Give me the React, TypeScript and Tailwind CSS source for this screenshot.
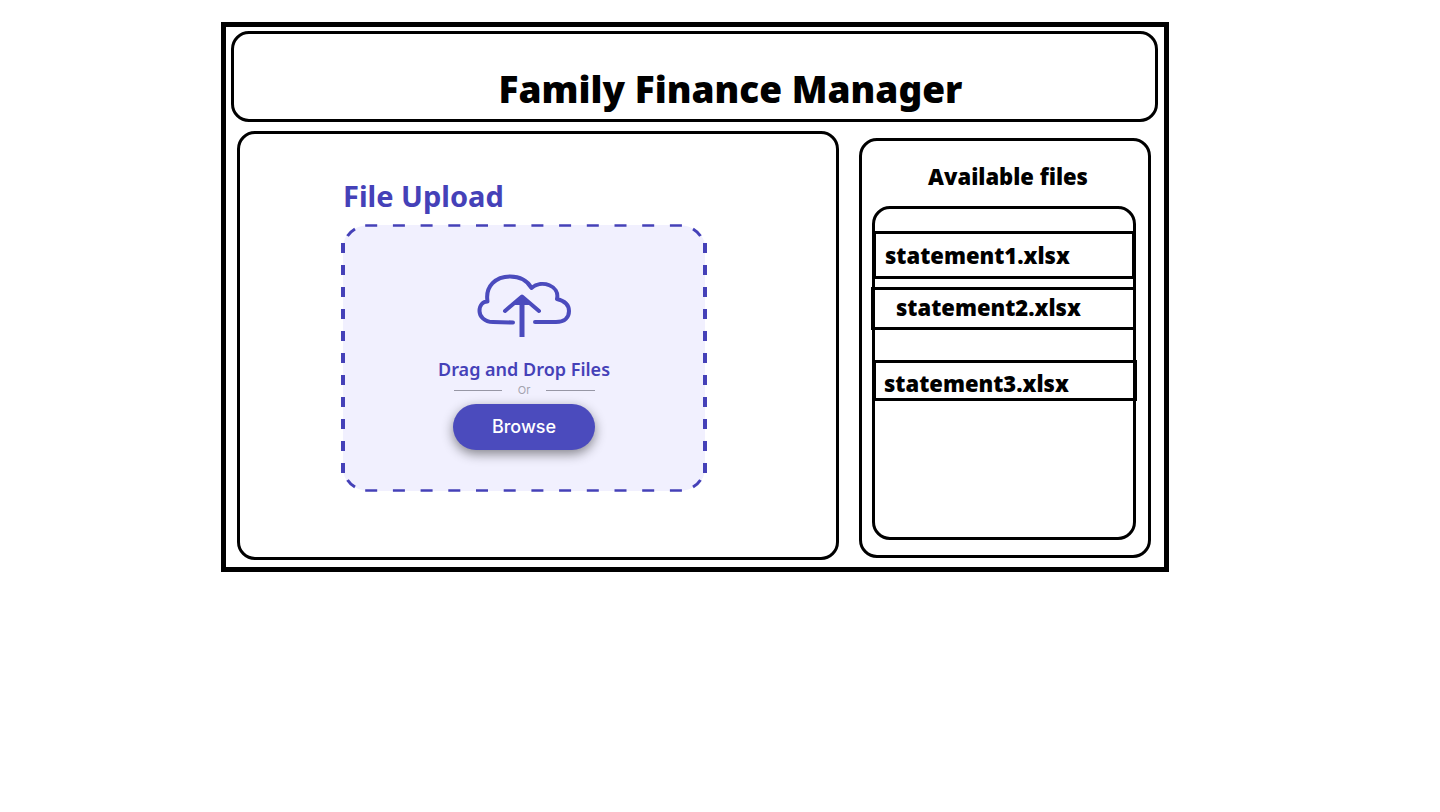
const heavy = "font-['Noto_Sans',sans-serif] font-black";

function UploadBorder() {
  return (
    <svg
      aria-hidden="true"
      className="pointer-events-none absolute inset-0 -z-10 h-full w-full"
      viewBox="0 0 366 268"
      preserveAspectRatio="none"
      fill="none"
      stroke="#4541b8"
    >
      <rect x="2" y="1" width="362" height="266" rx="26" ry="22" fill="#f1f0fe" stroke="none" />
      <g strokeWidth="2.6" strokeDasharray="12 15.7">
        <path d="M24.2 1.5H342" />
        <path d="M24.2 266.5H342" />
      </g>
      <g strokeWidth="4" strokeDasharray="10 12">
        <path d="M2 19V249" />
        <path d="M364 19V249" />
      </g>
      <g strokeWidth="3">
        <path d="M6.500 12Q9 8 14 5" />
        <path d="M359.500 12Q357 8 352 5" />
        <path d="M6.500 256Q9 260 14 263" />
        <path d="M359.500 256Q357 260 352 263" />
      </g>
    </svg>
  );
}

function CloudUpload() {
  return (
    <svg
      aria-hidden="true"
      className="h-16 w-24"
      viewBox="0 0 96 64"
      fill="none"
      stroke="#4b4bbd"
      strokeWidth="4"
      strokeLinecap="round"
      strokeLinejoin="round"
    >
      <path d="M37 48.500L17 48C8 48 3.500 42 3.500 37C3.500 31 7 27.500 11.500 27.500C9 12 20 2.500 34 2.500C44 2.500 51 6 55.500 14C66 5 84 12 81 25C89 27 93 31 93 37C93 43 89 48 80 48H59" />
      <path strokeWidth="5" strokeLinecap="butt" d="M46 63V24" />
      <path d="M29 37L46 22.500L63 37" />
      <path fill="#4b4bbd" strokeWidth="2" d="M38 30L46 22.500L54 30Z" />
    </svg>
  );
}

const files = [
  { name: "statement1.xlsx", row: "mt-[22px] -mx-0.5 h-12 pl-[9px]" },
  { name: "statement2.xlsx", row: "mt-2 -ml-1 -mr-[3px] h-[43px] pl-[22px] pb-1" },
  { name: "statement3.xlsx", row: "mt-[30px] -ml-0.5 -mr-1 h-[41px] pl-2 pt-1" },
];

export default function App() {
  return (
    <div className="min-h-screen bg-white pt-[22px] pr-4 pl-4 text-black lg:pl-[221px]">
      <div className="w-full max-w-[948px] border-[5px] border-black pt-1 pr-1.5 pb-[7px] pl-[5px]">
        <header className="flex h-[91px] items-end justify-center rounded-[18px] border-[3px] border-black pb-2 pl-[72px]">
          <h1 className={`${heavy} text-[37px] leading-[44px]`}>Family Finance Manager</h1>
        </header>
        <main className="mt-[9px] flex items-start gap-5 pr-[7px] pl-1.5">
          <section className="h-[429px] min-w-0 flex-1 rounded-[18px] border-[3px] border-black pt-[42px] pl-[101px]">
            <h2 className="pl-0.5 font-['Noto_Sans',sans-serif] text-[29px] leading-10 font-bold text-[#4541b8]">
              File Upload
            </h2>
            <div className="relative isolate mt-2 flex h-[268px] w-full max-w-[366px] flex-col items-center pt-[50px]">
              <UploadBorder />
              <CloudUpload />
              <p className="mt-[19px] font-['Noto_Sans',sans-serif] text-lg leading-6 font-semibold text-[#4541b8]">
                Drag and Drop Files
              </p>
              <div className="flex h-[18px] w-[141px] items-center gap-4 font-['Inter',sans-serif] text-[11px] text-[#a3a3ae]">
                <span className="h-px flex-1 bg-[#9797a5]" />
                Or
                <span className="h-px flex-1 bg-[#9797a5]" />
              </div>
              <button
                type="button"
                className="mt-[5px] h-[46px] w-[142px] rounded-[28px] bg-[#4b4bbd] font-['Inter',sans-serif] text-lg leading-6 font-medium text-white shadow-[0_4px_12px_rgba(0,0,0,0.45)]"
              >
                Browse
              </button>
            </div>
          </section>
          <aside className="mt-[7px] h-[420px] w-[292px] shrink-0 rounded-[18px] border-[3px] border-black pt-[19px] pr-3 pl-2.5">
            <h2 className={`${heavy} pl-2 text-center text-[22px] leading-8`}>Available files</h2>
            <ul className="mt-3.5 h-[334px] rounded-[18px] border-[3px] border-black">
              {files.map((f) => (
                <li
                  key={f.name}
                  className={`flex items-center border-[3px] border-black text-[22px] leading-8 ${heavy} ${f.row}`}
                >
                  {f.name}
                </li>
              ))}
            </ul>
          </aside>
        </main>
      </div>
    </div>
  );
}
